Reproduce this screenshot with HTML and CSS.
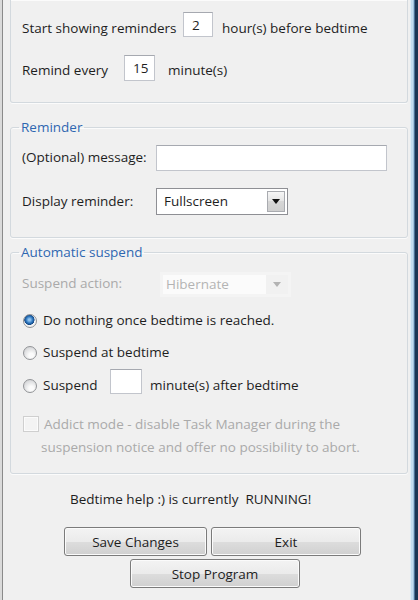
FILE: index.html
```html
<!DOCTYPE html>
<html lang="en">

<head>
    <meta charset="UTF-8">
    <meta name="viewport" content="width=device-width, initial-scale=1.0">
    <title>Bedtime help :)</title>
    <link rel="stylesheet" href="styles.css">
</head>

<body>
    <div class="window">
        <div class="edge-left"></div>

        <div class="main">
            <!-- Schedule group, its top is scrolled out of view -->
            <div class="group group-top">
                <div class="row row-hours">
                    <span class="label label-hours">Start showing reminders</span>
                    <input class="box box-hours" type="text" value="2">
                    <span class="label after-hours">hour(s) before bedtime</span>
                </div>
                <div class="row row-every">
                    <span class="label label-every">Remind every</span>
                    <input class="box box-every" type="text" value="15">
                    <span class="label after-every">minute(s)</span>
                </div>
            </div>

            <fieldset class="group group-reminder">
                <legend>Reminder</legend>
                <div class="group-body body-reminder">
                    <div class="row row-message">
                        <span class="label label-wide">(Optional) message:</span>
                        <input class="box box-message" type="text" value="">
                    </div>
                    <div class="row row-display">
                        <span class="label label-wide">Display reminder:</span>
                        <div class="combo">
                            <span class="combo-text">Fullscreen</span>
                            <span class="combo-btn"><span class="arrow"></span></span>
                        </div>
                    </div>
                </div>
            </fieldset>

            <fieldset class="group group-suspend">
                <legend>Automatic suspend</legend>
                <div class="group-body body-suspend">
                    <div class="row row-action">
                        <span class="label label-action disabled">Suspend action:</span>
                        <div class="combo combo-off">
                            <span class="combo-text">Hibernate</span>
                            <span class="combo-btn"><span class="arrow"></span></span>
                        </div>
                    </div>

                    <div class="row radio-row row-nothing">
                        <span class="radio checked"></span>
                        <span class="label">Do nothing once bedtime is reached.</span>
                    </div>
                    <div class="row radio-row row-at">
                        <span class="radio"></span>
                        <span class="label">Suspend at bedtime</span>
                    </div>
                    <div class="row row-after">
                        <span class="radio"></span>
                        <span class="label label-suspend">Suspend</span>
                        <input class="box box-after" type="text" value="">
                        <span class="label after-min">minute(s) after bedtime</span>
                    </div>

                    <div class="row row-addict">
                        <span class="check"></span>
                        <div class="addict disabled">
                            <div class="addict-first">Addict mode - disable Task Manager during the</div>
                            <div>suspension notice and offer no possibility to abort.</div>
                        </div>
                    </div>
                </div>
            </fieldset>

            <p class="status">Bedtime help :) is currently &nbsp;RUNNING!</p>

            <div class="buttons buttons-top">
                <button class="btn btn-save">Save Changes</button>
                <button class="btn btn-exit">Exit</button>
            </div>
            <div class="buttons buttons-bottom">
                <button class="btn btn-stop">Stop Program</button>
            </div>
        </div>

        <div class="edge-right"></div>
    </div>
</body>

</html>
```

FILE: styles.css
```css
* {
    box-sizing: border-box;
}

body {
    margin: 0;
    background-color: #f0f0f0;
    font-family: "Open Sans", "Noto Sans", sans-serif;
    font-size: 13.5px;
    line-height: 16px;
    color: #1e1e1e;
}

.window {
    display: flex;
    height: 600px;
    overflow: hidden;
}

/* window frame, left and right */
.edge-left {
    width: 3px;
    background: linear-gradient(to right, #dadada 0 2px, #8a8a8a 2px 3px);
}

.edge-right {
    width: 9px;
    background: linear-gradient(to right, #f0f0f0 0 1px, #dfeaf3 1px 2px, #c3dbee 2px 4px, #9fc0dc 4px 5px, #4d6f94 5px 6px, #1b3453 6px 9px);
}

.main {
    flex: 1;
    padding: 0 1px 0 7px;
}

/* group boxes */
.group {
    margin: 0;
    padding: 0;
    min-width: 0;
    border: 1px solid #d3d9de;
    border-radius: 3px;
    box-shadow: 0 1px 0 #fbfbfb, inset 0 1px 0 #fbfbfb;
}

.group legend {
    margin-left: 8px;
    padding: 0 2px;
    line-height: 17px;
    color: #2f67b1;
}

.group-top {
    border-top: none;
    border-radius: 0 0 3px 3px;
    height: 103px;
    padding: 12px 0 0 11px;
}

.group-body {
    padding-left: 11px;
}

.group-reminder {
    margin-top: 16px;
}

.body-reminder {
    padding-top: 9px;
    padding-bottom: 22px;
}

.group-suspend {
    margin-top: 6px;
}

.body-suspend {
    padding-top: 11px;
    padding-bottom: 14px;
}

.row {
    display: flex;
    align-items: flex-start;
}

.label {
    white-space: nowrap;
}

.disabled {
    color: #aaaaaa;
}

/* text boxes */
.box {
    display: block;
    height: 25px;
    margin: 0;
    padding: 0 0 0 8px;
    border: 1px solid #c2c5cc;
    border-top-color: #a6a9b0;
    background: #fff;
    font: inherit;
    line-height: 23px;
    color: #1e1e1e;
    outline: none;
}

.label-hours {
    width: 161px;
    padding-top: 8px;
}

.box-hours {
    width: 30px;
}

.after-hours {
    margin-left: 9px;
    padding-top: 8px;
}

.row-every {
    margin-top: 18px;
}

.label-every {
    width: 102px;
    padding-top: 7px;
}

.box-every {
    width: 31px;
    height: 26px;
}

.after-every {
    margin-left: 13px;
    padding-top: 7px;
}

.label-wide {
    width: 134px;
}

.row-message .label {
    padding-top: 4px;
}

.box-message {
    width: 231px;
    height: 26px;
}

.row-display {
    margin-top: 17px;
}

.row-display .label {
    padding-top: 5px;
}

/* drop down lists */
.combo {
    display: flex;
    width: 132px;
    height: 27px;
    padding: 2px;
    border: 1px solid #8e8f94;
    background: #fff;
}

.combo-text {
    flex: 1;
    padding-left: 5px;
    line-height: 21px;
}

.combo-btn {
    display: flex;
    align-items: center;
    justify-content: center;
    width: 18px;
    border: 1px solid #a9abb0;
    background: linear-gradient(#f6f6f6, #e4e4e4 50%, #d6d6d6 50%, #cfcfcf);
}

.arrow {
    width: 0;
    height: 0;
    border-left: 4px solid transparent;
    border-right: 4px solid transparent;
    border-top: 5px solid #111;
}

.label-action {
    width: 138px;
    padding-top: 3px;
}

.combo-off {
    width: 131px;
    height: 25px;
    border-color: #f4f4f4;
    background: #f4f4f4;
}

.combo-off .combo-text {
    background: #fbfbfb;
    color: #b4b4b4;
    padding-left: 3px;
    line-height: 19px;
}

.combo-off .combo-btn {
    width: 22px;
    border: none;
    background: #f1f1f1;
}

.combo-off .arrow {
    border-top-color: #b3b3b3;
}

/* radio buttons */
.radio {
    flex: none;
    width: 14px;
    height: 14px;
    margin: 2px 6px 0 1px;
    border: 1px solid #929497;
    border-radius: 50%;
    background: radial-gradient(circle at 60% 70%, #fbfbfb 0 20%, #d9dadc 70%, #c7c8ca 100%);
}

.radio.checked {
    background: radial-gradient(circle at 45% 40%, #8fc3f0 0 10%, #2a73bb 35%, #174a86 50%, #f6f6f6 55%, #e4e4e4 100%);
}

.row-nothing {
    margin-top: 15px;
}

.row-at {
    margin-top: 16px;
}

.row-after {
    margin-top: 9px;
}

.row-after .radio {
    margin-top: 10px;
}

.label-suspend {
    width: 67px;
    padding-top: 8px;
}

.box-after {
    width: 32px;
}

.after-min {
    margin-left: 8px;
    padding-top: 8px;
}

/* disabled check box */
.row-addict {
    margin-top: 19px;
}

.check {
    flex: none;
    width: 16px;
    height: 16px;
    margin: 3px 2px 0 1px;
    border: 1px solid #cfcfcf;
    background: #f3f3f3;
    box-shadow: inset 0 0 0 1px #fbfbfb;
}

.addict {
    line-height: 23px;
    white-space: nowrap;
}

.addict-first {
    padding-left: 3px;
}

.status {
    margin: 17px 0 0 60px;
}

/* push buttons */
.buttons {
    display: flex;
    gap: 4px;
}

.buttons-top {
    margin: 20px 0 0 54px;
}

.buttons-bottom {
    margin: 3px 0 0 120px;
}

.btn {
    height: 29px;
    padding: 0;
    border: 1px solid #7b7b7b;
    border-radius: 3px;
    background: linear-gradient(#f3f3f3, #ebebeb 50%, #dddddd 50%, #d0d0d0);
    box-shadow: inset 0 0 0 1px #fbfbfb;
    font: inherit;
    color: #1e1e1e;
}

.btn-save {
    width: 143px;
}

.btn-exit {
    width: 150px;
}

.btn-stop {
    width: 170px;
}
```
